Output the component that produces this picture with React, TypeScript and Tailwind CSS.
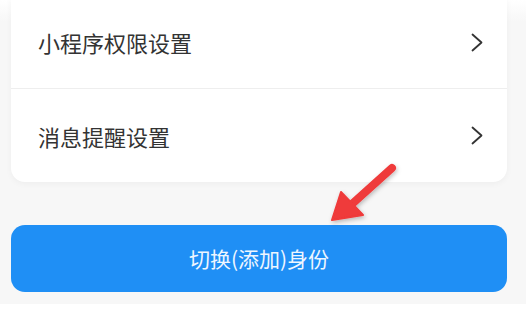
const rows = ['小程序权限设置', '消息提醒设置'];

const Chevron = () => (
    <svg width="12" height="19" viewBox="0 0 12 19" fill="none" stroke="#333333" strokeWidth="1.8" strokeLinecap="round" strokeLinejoin="round">
        <polyline points="1.5,1.5 10.5,9.5 1.5,17.5" />
    </svg>
);

const Arrow = () => (
    <svg className="absolute left-[318px] top-[158px] pointer-events-none" width="90" height="76" viewBox="0 0 90 76">
        <defs>
            <filter id="sh" x="-20%" y="-20%" width="140%" height="140%">
                <feDropShadow dx="1" dy="2" stdDeviation="2" floodColor="#000" floodOpacity="0.25" />
            </filter>
        </defs>
        <g filter="url(#sh)" fill="#ef3a3a" stroke="#ef3a3a">
            <line x1="74" y1="10" x2="34" y2="46" strokeWidth="8" strokeLinecap="round" />
            <polygon points="14,62 23,34 45,57" strokeWidth="2" strokeLinejoin="round" />
        </g>
    </svg>
);

const App = () => {
    return (
        <div className="relative w-[526px] h-[316px] overflow-hidden bg-[#f7f7f7] font-['Noto_Sans_CJK_SC','Noto_Sans',sans-serif]">
            <div className="absolute inset-x-0 top-0 h-[22px] bg-gradient-to-b from-white to-[#f7f7f7]" />
            <div className="px-[11px] pr-[19px]">
                <div className="relative -mt-[4px] bg-white rounded-b-[14px] shadow-[0_2px_6px_rgba(0,0,0,0.04)]">
                    {rows.map((label, i) => (
                        <div
                            key={label}
                            className={`flex items-center justify-between h-[93px] pl-[27px] pr-[24px] ${i === 0 ? 'border-b border-[#eeeeee]' : ''}`}
                        >
                            <span className="text-[22px] leading-none text-[#333333]">{label}</span>
                            <Chevron />
                        </div>
                    ))}
                </div>

                <button className="mt-[43px] w-full h-[67px] rounded-[14px] bg-[#1f8ff5] text-[#eef6ff] text-[21px] leading-none flex items-center justify-center">
                    切换(添加)身份
                </button>
            </div>
            <div className="absolute inset-x-0 bottom-0 h-[12px] bg-white" />
            <Arrow />
        </div>
    );
};

export default App;
